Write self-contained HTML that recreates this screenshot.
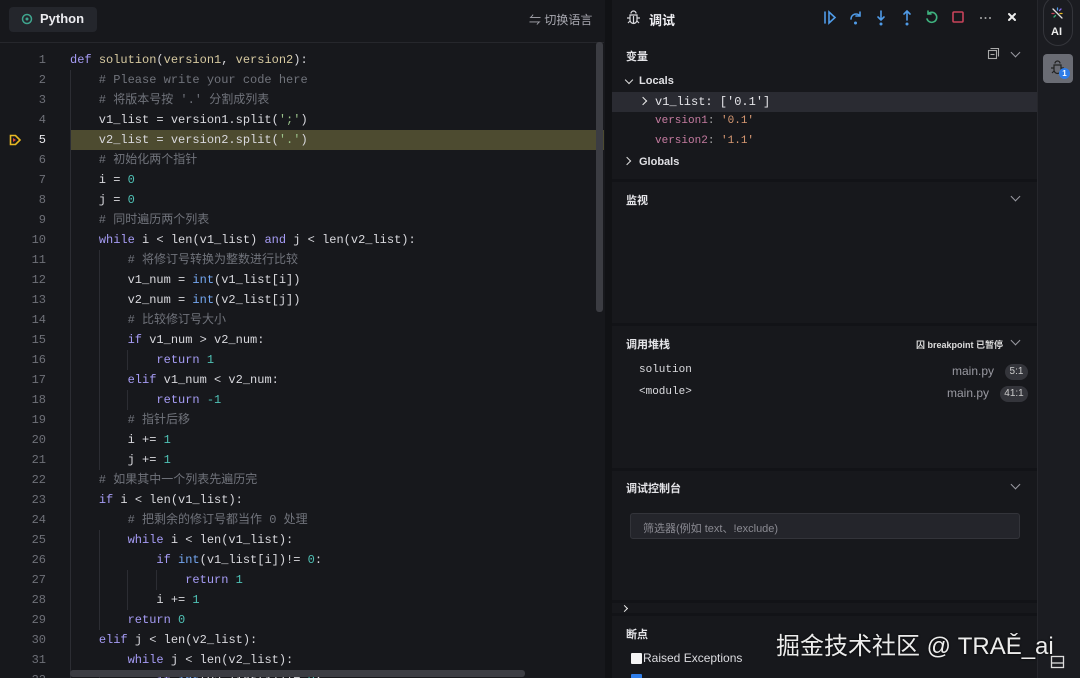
<!DOCTYPE html>
<html><head><meta charset="utf-8"><style>
*{margin:0;padding:0;box-sizing:border-box}
html,body{width:1080px;height:678px;overflow:hidden}
body{background:#17181c;font-family:"Liberation Sans","Noto Sans CJK SC",sans-serif;color:#d4d4d8;position:relative}
.abs{position:absolute}
.code{font-family:"Liberation Mono","Noto Sans CJK SC",monospace;font-size:12px;white-space:pre}
.ln{position:absolute;width:46px;text-align:right;left:0;color:#6e7078;font-family:"Liberation Mono",monospace;font-size:12px;height:20px;line-height:20px}
.line{position:absolute;left:70px;color:#d9d9de;height:20px;line-height:20px;overflow:hidden}
.k{color:#a69cf5}.c{color:#70737b}.n{color:#4fc1b5}.b{color:#74a7f0}.s{color:#9bc28a}.p{color:#d6c9a0}
.guide{position:absolute;width:1px;background:#2c2d33}
.hdr{position:absolute;left:626px;font-size:11px;font-weight:bold;color:#e4e4e8}
.chev{position:absolute;left:1012px;width:7px;height:7px;border-right:1.5px solid #9a9aa2;border-bottom:1.5px solid #9a9aa2;transform:rotate(45deg)}
.sep{position:absolute;left:612px;width:425px;height:3px;background:#121317}
</style></head><body>
<div class="abs" style="left:9px;top:7px;width:88px;height:25px;background:#24262c;border-radius:4px"></div>
<svg class="abs" style="left:21px;top:13px" width="12" height="12" viewBox="0 0 12 12"><circle cx="6" cy="6" r="4.5" fill="none" stroke="#3fa58e" stroke-width="1.5"/><circle cx="6" cy="6" r="1.5" fill="#3fa58e"/></svg>
<div class="abs" style="left:40px;top:11px;font-size:13px;font-weight:bold;color:#ececf0">Python</div>
<div class="abs" style="left:529px;top:11px;font-size:12px;color:#a8a8b0">⇋ 切换语言</div>
<div class="abs" style="left:0;top:42px;width:604px;height:1px;background:#26272c"></div>
<div class="abs" style="left:70px;top:130px;width:534px;height:20px;background:#4d4b30"></div>
<svg class="abs" style="left:9px;top:134px" width="13" height="12" viewBox="0 0 13 12"><path d="M1.5 1.5h5l4.5 4.5-4.5 4.5h-5z" fill="none" stroke="#e8b923" stroke-width="1.6"/><path d="M4 4l3 2-3 2z" fill="#e0463a"/></svg>
<div class="guide" style="left:70px;top:70px;height:608px"></div>
<div class="guide" style="left:99px;top:250px;height:220px"></div>
<div class="guide" style="left:127px;top:350px;height:20px"></div>
<div class="guide" style="left:127px;top:390px;height:20px"></div>
<div class="guide" style="left:99px;top:530px;height:100px"></div>
<div class="guide" style="left:127px;top:570px;height:40px"></div>
<div class="guide" style="left:156px;top:570px;height:20px"></div>
<div class="guide" style="left:99px;top:670px;height:10px"></div>
<div class="code">
<div class="ln" style="top:50px">1</div><div class="line" style="top:50px"><span class="k">def</span> <span class="p">solution</span>(<span class="p">version1</span>, <span class="p">version2</span>):</div>
<div class="ln" style="top:70px">2</div><div class="line c" style="top:70px">    # Please write your code here</div>
<div class="ln" style="top:90px">3</div><div class="line c" style="top:90px">    # 将版本号按 '.' 分割成列表</div>
<div class="ln" style="top:110px">4</div><div class="line" style="top:110px">    v1_list = version1.split(<span class="s">';'</span>)</div>
<div class="ln" style="top:130px;color:#e8e8ec">5</div><div class="line" style="top:130px">    v2_list = version2.split(<span class="s">'.'</span>)</div>
<div class="ln" style="top:150px">6</div><div class="line c" style="top:150px">    # 初始化两个指针</div>
<div class="ln" style="top:170px">7</div><div class="line" style="top:170px">    i = <span class="n">0</span></div>
<div class="ln" style="top:190px">8</div><div class="line" style="top:190px">    j = <span class="n">0</span></div>
<div class="ln" style="top:210px">9</div><div class="line c" style="top:210px">    # 同时遍历两个列表</div>
<div class="ln" style="top:230px">10</div><div class="line" style="top:230px">    <span class="k">while</span> i &lt; len(v1_list) <span class="k">and</span> j &lt; len(v2_list):</div>
<div class="ln" style="top:250px">11</div><div class="line c" style="top:250px">        # 将修订号转换为整数进行比较</div>
<div class="ln" style="top:270px">12</div><div class="line" style="top:270px">        v1_num = <span class="b">int</span>(v1_list[i])</div>
<div class="ln" style="top:290px">13</div><div class="line" style="top:290px">        v2_num = <span class="b">int</span>(v2_list[j])</div>
<div class="ln" style="top:310px">14</div><div class="line c" style="top:310px">        # 比较修订号大小</div>
<div class="ln" style="top:330px">15</div><div class="line" style="top:330px">        <span class="k">if</span> v1_num &gt; v2_num:</div>
<div class="ln" style="top:350px">16</div><div class="line" style="top:350px">            <span class="k">return</span> <span class="n">1</span></div>
<div class="ln" style="top:370px">17</div><div class="line" style="top:370px">        <span class="k">elif</span> v1_num &lt; v2_num:</div>
<div class="ln" style="top:390px">18</div><div class="line" style="top:390px">            <span class="k">return</span> <span class="n">-1</span></div>
<div class="ln" style="top:410px">19</div><div class="line c" style="top:410px">        # 指针后移</div>
<div class="ln" style="top:430px">20</div><div class="line" style="top:430px">        i += <span class="n">1</span></div>
<div class="ln" style="top:450px">21</div><div class="line" style="top:450px">        j += <span class="n">1</span></div>
<div class="ln" style="top:470px">22</div><div class="line c" style="top:470px">    # 如果其中一个列表先遍历完</div>
<div class="ln" style="top:490px">23</div><div class="line" style="top:490px">    <span class="k">if</span> i &lt; len(v1_list):</div>
<div class="ln" style="top:510px">24</div><div class="line c" style="top:510px">        # 把剩余的修订号都当作 0 处理</div>
<div class="ln" style="top:530px">25</div><div class="line" style="top:530px">        <span class="k">while</span> i &lt; len(v1_list):</div>
<div class="ln" style="top:550px">26</div><div class="line" style="top:550px">            <span class="k">if</span> <span class="b">int</span>(v1_list[i])!= <span class="n">0</span>:</div>
<div class="ln" style="top:570px">27</div><div class="line" style="top:570px">                <span class="k">return</span> <span class="n">1</span></div>
<div class="ln" style="top:590px">28</div><div class="line" style="top:590px">            i += <span class="n">1</span></div>
<div class="ln" style="top:610px">29</div><div class="line" style="top:610px">        <span class="k">return</span> <span class="n">0</span></div>
<div class="ln" style="top:630px">30</div><div class="line" style="top:630px">    <span class="k">elif</span> j &lt; len(v2_list):</div>
<div class="ln" style="top:650px">31</div><div class="line" style="top:650px">        <span class="k">while</span> j &lt; len(v2_list):</div>
<div class="ln" style="top:670px">32</div><div class="line" style="top:670px">            <span class="k">if</span> <span class="b">int</span>(v2_list[j])!= <span class="n">0</span>:</div>
</div>
<div class="abs" style="left:596px;top:42px;width:7px;height:270px;background:#3b3c42;border-radius:3px"></div>
<div class="abs" style="left:70px;top:670px;width:455px;height:7px;background:#3b3c42;border-radius:3px"></div>
<div class="abs" style="left:605px;top:0;width:7px;height:678px;background:#111215"></div>
<svg class="abs" style="left:626px;top:10px" width="15" height="15" viewBox="0 0 15 15" fill="none" stroke="#d8d8dc" stroke-width="1.2"><path d="M5 3.5a2.5 2.5 0 015 0M4 5h7v5a3.5 3.5 0 01-7 0zM1 8h3M11 8h3M2 13l2-2M13 13l-2-2M7.5 6v7"/></svg>
<div class="abs" style="left:649px;top:10px;font-size:13px;font-weight:bold;color:#ececf0">调试</div>
<svg class="abs" style="left:820px;top:8px" width="200" height="20" viewBox="0 0 200 20" fill="none" stroke-width="1.6" stroke-linecap="round">
<path d="M5 4v11M9 4l6 5.5-6 5.5z" stroke="#4f9be8"/>
<path d="M31 11a5 5 0 019-3M40 4v4h-4" stroke="#4f9be8"/><circle cx="35.5" cy="15" r="1.5" fill="#4f9be8" stroke="none"/>
<path d="M61 3v9M58 9l3 3 3-3" stroke="#4f9be8"/><circle cx="61" cy="16" r="1.5" fill="#4f9be8" stroke="none"/>
<path d="M87 12V3M84 6l3-3 3 3" stroke="#4f9be8"/><circle cx="87" cy="16" r="1.5" fill="#4f9be8" stroke="none"/>
<path d="M108 6a5 5 0 11-1 5M108 3v3h3" stroke="#3fb27f"/>
<rect x="133" y="4" width="10" height="10" rx="1" stroke="#c8435a"/>
<circle cx="161" cy="10" r="1" fill="#aaa" stroke="none"/><circle cx="165.5" cy="10" r="1" fill="#aaa" stroke="none"/><circle cx="170" cy="10" r="1" fill="#aaa" stroke="none"/>
<path d="M189 6l6 6M195 6l-6 6" stroke="#eee" stroke-width="2"/>
</svg>
<div class="hdr" style="top:48px">变量</div>
<svg class="abs" style="left:987px;top:47px" width="13" height="13" viewBox="0 0 13 13" fill="none" stroke="#aaa" stroke-width="1.1"><rect x="1.5" y="3.5" width="8" height="8"/><path d="M3.5 1.5h8v8"/><path d="M3.5 7.5h4"/></svg>
<div class="chev" style="top:49px"></div>
<div class="abs" style="left:626px;top:77px;width:6px;height:6px;border-right:1.5px solid #ddd;border-bottom:1.5px solid #ddd;transform:rotate(45deg)"></div>
<div class="abs" style="left:639px;top:75px;font-size:11px;font-weight:bold;color:#e0e0e4">Locals</div>
<div class="abs" style="left:612px;top:92px;width:425px;height:20px;background:#2a2b32"></div>
<div class="abs" style="left:640px;top:98px;width:6px;height:6px;border-right:1.5px solid #eee;border-top:1.5px solid #eee;transform:rotate(45deg)"></div>
<div class="abs code" style="left:655px;top:95px;font-size:12px;color:#e4e4e8">v1_list: ['0.1']</div>
<div class="abs code" style="left:655px;top:115px;font-size:11px;color:#c57ba0">version1<span style="color:#aaa">:</span> <span style="color:#d99a73">'0.1'</span></div>
<div class="abs code" style="left:655px;top:135px;font-size:11px;color:#c57ba0">version2<span style="color:#aaa">:</span> <span style="color:#d99a73">'1.1'</span></div>
<div class="abs" style="left:624px;top:158px;width:6px;height:6px;border-right:1.5px solid #ddd;border-top:1.5px solid #ddd;transform:rotate(45deg)"></div>
<div class="abs" style="left:639px;top:156px;font-size:11px;font-weight:bold;color:#e0e0e4">Globals</div>
<div class="sep" style="top:179px"></div>
<div class="hdr" style="top:192px">监视</div>
<div class="chev" style="top:193px"></div>
<div class="sep" style="top:323px"></div>
<div class="hdr" style="top:336px">调用堆栈</div>
<div class="abs" style="left:916px;top:338px;font-size:9px;font-weight:bold;color:#ddd">囚 breakpoint 已暂停</div>
<div class="chev" style="top:337px"></div>
<div class="abs code" style="left:639px;top:364px;font-size:11px;color:#dcdce0">solution</div>
<div class="abs" style="left:952px;top:364px;font-size:12px;color:#9a9aa2">main.py</div>
<div class="abs" style="left:1005px;top:364px;width:23px;height:16px;border-radius:8px;background:#34353b;font-size:10px;color:#ccc;text-align:center;line-height:16px">5:1</div>
<div class="abs code" style="left:639px;top:386px;font-size:11px;color:#dcdce0">&lt;module&gt;</div>
<div class="abs" style="left:947px;top:386px;font-size:12px;color:#9a9aa2">main.py</div>
<div class="abs" style="left:1000px;top:386px;width:28px;height:16px;border-radius:8px;background:#34353b;font-size:10px;color:#ccc;text-align:center;line-height:16px">41:1</div>
<div class="sep" style="top:468px"></div>
<div class="hdr" style="top:480px">调试控制台</div>
<div class="chev" style="top:481px"></div>
<div class="abs" style="left:630px;top:513px;width:390px;height:26px;background:#24252b;border:1px solid #33343a;border-radius:3px;font-size:11px;color:#8a8a92;padding:6px 12px">筛选器(例如 text、!exclude)</div>
<div class="sep" style="top:600px"></div>
<div class="abs" style="left:622px;top:606px;width:5px;height:5px;border-right:1.5px solid #eee;border-top:1.5px solid #eee;transform:rotate(45deg)"></div>
<div class="sep" style="top:613px"></div>
<div class="hdr" style="top:626px">断点</div>
<div class="abs" style="left:631px;top:653px;width:11px;height:11px;background:#f4f4f4;border-radius:1px"></div>
<div class="abs" style="left:643px;top:651px;font-size:12px;color:#dcdce0">Raised Exceptions</div>
<div class="abs" style="left:631px;top:674px;width:11px;height:11px;background:#2f7de8;border-radius:1px"></div>
<div class="abs" style="left:1037px;top:0;width:43px;height:678px;background:#1b1c21;border-left:1px solid #26272c"></div>
<div class="abs" style="left:1043px;top:-4px;width:30px;height:50px;border:1px solid #34353b;border-radius:15px"></div>
<svg class="abs" style="left:1051px;top:7px" width="13" height="13" viewBox="0 0 13 13" stroke-width="1.3" stroke-linecap="round"><path d="M2 2l9 9" stroke="#e0e0e0"/><path d="M6.5 1v2" stroke="#4f9be8"/><path d="M11 6.5h-2" stroke="#e8b923"/><path d="M1 6.5h2" stroke="#c8435a"/><path d="M10 2l-1.5 1.5" stroke="#8b6cf0"/><path d="M3 10l1.5-1.5" stroke="#3fb27f"/></svg>
<div class="abs" style="left:1051px;top:26px;font-size:11px;font-weight:bold;color:#eee">AI</div>
<div class="abs" style="left:1043px;top:54px;width:30px;height:29px;background:#6a6c74;border-radius:4px"></div>
<svg class="abs" style="left:1050px;top:60px" width="15" height="15" viewBox="0 0 15 15" fill="none" stroke="#222" stroke-width="1.2"><path d="M5 3.5a2.5 2.5 0 015 0M4 5h7v5a3.5 3.5 0 01-7 0zM1 8h3M11 8h3M2 13l2-2M13 13l-2-2"/></svg>
<div class="abs" style="left:1059px;top:68px;width:11px;height:11px;background:#2f7de8;border-radius:50%;font-size:8px;color:#fff;text-align:center;line-height:11px;font-weight:bold">1</div>
<svg class="abs" style="left:1050px;top:655px" width="15" height="14" viewBox="0 0 15 14" fill="none" stroke="#ddd" stroke-width="1.3"><rect x="1.5" y="1.5" width="12" height="11"/><path d="M1.5 8h12"/></svg>
<div class="abs" style="left:776px;top:626px;font-size:24px;color:#ececec;white-space:nowrap;text-shadow:0 0 2px #000;z-index:5">掘金技术社区 @ TRAĚ_ai</div>
</body></html>
